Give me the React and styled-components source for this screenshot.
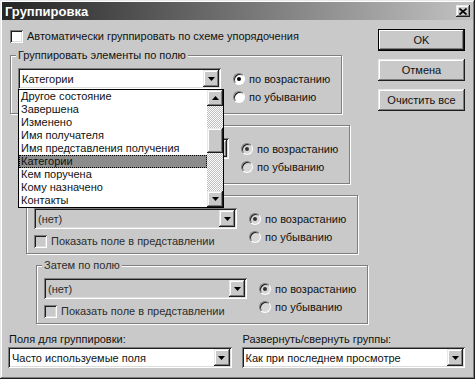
import React from "react";
import styled, { createGlobalStyle, css } from "styled-components";

const face = "#c9c9c9";

const GlobalStyle = createGlobalStyle`
  html, body { margin: 0; padding: 0; background: ${face}; }
  body {
    font-family: "Liberation Sans", Arial, sans-serif;
    font-size: 11px;
    color: #111;
  }
`;

const raised = css`
  box-shadow: inset -1px -1px #1e1e1e, inset 1px 1px #e8e8e8,
    inset -2px -2px #7e7e7e, inset 2px 2px #fff;
`;

const sunken = css`
  box-shadow: inset 1px 1px #7e7e7e, inset -1px -1px #fff,
    inset 2px 2px #1e1e1e, inset -2px -2px #dcdcdc;
`;

const Window = styled.div`
  width: 475px;
  height: 379px;
  box-sizing: border-box;
  padding: 2px;
  background: ${face};
  ${raised};
  display: flex;
  flex-direction: column;
`;

const TitleBar = styled.div`
  height: 18px;
  display: flex;
  align-items: center;
  padding: 0 3px 0 3px;
  background: linear-gradient(to right, #242424, #c2c2c2);
  color: #fff;
  font-weight: bold;
  font-size: 13px;
`;

const CloseButton = styled.div`
  margin-left: auto;
  width: 14px;
  height: 12px;
  background: ${face};
  ${raised};
  display: flex;
  align-items: center;
  justify-content: center;
`;

const Content = styled.div`
  flex: 1;
  display: flex;
  flex-direction: column;
  padding: 9px 8px 9px 6px;
`;

const TopArea = styled.div`
  display: flex;
  align-items: flex-start;
`;

const LeftColumn = styled.div`
  flex: 1;
  display: flex;
  flex-direction: column;
  margin-left: 2px;
`;

const ButtonColumn = styled.div`
  width: 87px;
  display: flex;
  flex-direction: column;
  gap: 8px;
`;

const Button = styled.div`
  height: 22px;
  box-sizing: border-box;
  display: flex;
  align-items: center;
  justify-content: center;
  background: ${face};
  ${raised};
  ${(p) =>
    p.$default &&
    css`
      outline: 1px solid #000;
      outline-offset: -1px;
      box-shadow: inset -2px -2px #1e1e1e, inset 2px 2px #fff,
        inset -3px -3px #7e7e7e;
    `}
`;

const CheckRow = styled.label`
  display: flex;
  align-items: center;
  gap: 4px;
  height: 13px;
  line-height: 13px;
  white-space: nowrap;
  margin-top: ${(p) => p.$offset || 0}px;
  color: ${(p) => (p.$disabled ? "#2c2c2c" : "#111")};
`;

const CheckBox = styled.span`
  width: 13px;
  height: 13px;
  flex: none;
  box-sizing: border-box;
  background: ${(p) => (p.$disabled ? face : "#fff")};
  ${sunken};
`;

const GroupBox = styled.div`
  position: relative;
  width: 332px;
  height: 59px;
  box-sizing: border-box;
  margin-top: ${(p) => (p.$first ? 12 : 11)}px;
  margin-left: ${(p) => p.$indent}px;
  border: 1px solid #7e7e7e;
  box-shadow: inset 1px 1px #fff, 1px 1px #fff;
`;

const Legend = styled.span`
  position: absolute;
  top: -7px;
  left: 5px;
  padding: 0 2px;
  line-height: 13px;
  background: ${face};
  color: ${(p) => (p.$disabled ? "#2c2c2c" : "#111")};
`;

const GroupGrid = styled.div`
  display: grid;
  grid-template-columns: 203px auto;
  column-gap: 12px;
  row-gap: 6px;
  padding: 12px 0 0 7px;
`;

const Combo = styled.div`
  position: relative;
  height: 21px;
  box-sizing: border-box;
  padding: 2px;
  display: flex;
  align-items: center;
  background: ${(p) => (p.$disabled ? face : "#fff")};
  color: ${(p) => (p.$disabled ? "#2c2c2c" : "#111")};
  ${sunken};
`;

const ComboText = styled.span`
  flex: 1;
  padding-left: 2px;
  white-space: nowrap;
`;

const DropButton = styled.span`
  width: 16px;
  height: 17px;
  flex: none;
  background: ${face};
  ${raised};
  display: flex;
  align-items: center;
  justify-content: center;
`;

const RadioColumn = styled.div`
  grid-column: 2;
  grid-row: 1 / span 2;
  display: flex;
  flex-direction: column;
  padding-top: 2px;
`;

const RadioRow = styled.label`
  display: flex;
  align-items: center;
  gap: 4px;
  height: 18px;
  white-space: nowrap;
`;

const RadioCircle = styled.span`
  position: relative;
  width: 12px;
  height: 12px;
  flex: none;
  box-sizing: border-box;
  border-radius: 50%;
  border: 1px solid;
  border-color: #7e7e7e #fff #fff #7e7e7e;
  box-shadow: inset 1px 1px #1e1e1e;
  background: ${(p) => (p.$disabled ? "#d8d8d8" : "#fff")};
  &::after {
    content: "";
    display: ${(p) => (p.$checked ? "block" : "none")};
    position: absolute;
    left: 3px;
    top: 3px;
    width: 4px;
    height: 4px;
    border-radius: 50%;
    background: ${(p) => (p.$disabled ? "#333" : "#000")};
  }
`;

const DropList = styled.div`
  position: absolute;
  top: 100%;
  left: 0;
  width: 204px;
  z-index: 5;
  display: flex;
  background: #fff;
  border: 1px solid #000;
  color: #111;
`;

const ListItems = styled.div`
  flex: 1;
  min-width: 0;
`;

const ListItem = styled.div`
  height: 13px;
  line-height: 13px;
  padding-left: 2px;
  white-space: nowrap;
  overflow: hidden;
  ${(p) =>
    p.$selected &&
    css`
      background: #8c8c8c;
      outline: 1px dotted #000;
      outline-offset: -1px;
    `}
`;

const ScrollBar = styled.div`
  width: 16px;
  display: flex;
  flex-direction: column;
`;

const ScrollArrow = styled.span`
  width: 16px;
  height: 16px;
  background: ${face};
  ${raised};
  display: flex;
  align-items: center;
  justify-content: center;
`;

const ScrollTrack = styled.div`
  flex: 1;
  background: repeating-conic-gradient(#fff 0 25%, #bdbdbd 0 50%) 0 0 / 2px 2px;
`;

const ScrollThumb = styled.div`
  margin-top: 22px;
  height: 25px;
  background: ${face};
  ${raised};
`;

const BottomArea = styled.div`
  display: grid;
  grid-template-columns: 1fr 1fr;
  column-gap: 10px;
  margin-top: 9px;
`;

const Field = styled.div`
  display: flex;
  flex-direction: column;
  gap: 1px;
`;

const FieldLabel = styled.span`
  line-height: 13px;
  padding-left: 1px;
`;

const Arrow = ({ up }) => (
  <svg width="7" height="4" viewBox="0 0 7 4">
    <polygon points={up ? "3.5,0 7,4 0,4" : "0,0 7,0 3.5,4"} fill="#000" />
  </svg>
);

const ComboBox = ({ value, disabled, children }) => (
  <Combo $disabled={disabled}>
    <ComboText>{value}</ComboText>
    <DropButton>
      <Arrow />
    </DropButton>
    {children}
  </Combo>
);

const fieldChoices = [
  "Другое состояние",
  "Завершена",
  "Изменено",
  "Имя получателя",
  "Имя представления получения",
  "Категории",
  "Кем поручена",
  "Кому назначено",
  "Контакты",
];

const groups = [
  { legend: "Группировать элементы по полю", value: "Категории", indent: 0 },
  { legend: "Затем по полю", value: "(нет)", indent: 8, disabled: true },
  { legend: "Затем по полю", value: "(нет)", indent: 16, disabled: true },
  { legend: "Затем по полю", value: "(нет)", indent: 26, disabled: true },
];

const FieldList = () => (
  <DropList>
    <ListItems>
      {fieldChoices.map((name) => (
        <ListItem key={name} $selected={name === "Категории"}>
          {name}
        </ListItem>
      ))}
    </ListItems>
    <ScrollBar>
      <ScrollArrow>
        <Arrow up />
      </ScrollArrow>
      <ScrollTrack>
        <ScrollThumb />
      </ScrollTrack>
      <ScrollArrow>
        <Arrow />
      </ScrollArrow>
    </ScrollBar>
  </DropList>
);

const Group = ({ legend, value, indent, disabled, first }) => (
  <GroupBox $indent={indent} $first={first}>
    <Legend $disabled={disabled}>{legend}</Legend>
    <GroupGrid>
      <ComboBox value={value} disabled={disabled}>
        {first && <FieldList />}
      </ComboBox>
      <RadioColumn>
        <RadioRow>
          <RadioCircle $checked $disabled={disabled} />
          по возрастанию
        </RadioRow>
        <RadioRow>
          <RadioCircle $disabled={disabled} />
          по убыванию
        </RadioRow>
      </RadioColumn>
      <CheckRow $disabled={disabled}>
        <CheckBox $disabled={disabled} />
        Показать поле в представлении
      </CheckRow>
    </GroupGrid>
  </GroupBox>
);

export default function App() {
  return (
    <>
      <GlobalStyle />
      <Window>
        <TitleBar>
          Группировка
          <CloseButton>
            <svg width="8" height="7" viewBox="0 0 8 7">
              <path d="M0.5 0.5 L7.5 6.5 M7.5 0.5 L0.5 6.5" stroke="#000" strokeWidth="1.6" />
            </svg>
          </CloseButton>
        </TitleBar>
        <Content>
          <TopArea>
            <LeftColumn>
              <CheckRow $offset={1}>
                <CheckBox />
                Автоматически группировать по схеме упорядочения
              </CheckRow>
              {groups.map((g, i) => (
                <Group key={i} {...g} first={i === 0} />
              ))}
            </LeftColumn>
            <ButtonColumn>
              <Button $default>OK</Button>
              <Button>Отмена</Button>
              <Button>Очистить все</Button>
            </ButtonColumn>
          </TopArea>
          <BottomArea>
            <Field>
              <FieldLabel>Поля для группировки:</FieldLabel>
              <ComboBox value="Часто используемые поля" />
            </Field>
            <Field>
              <FieldLabel>Развернуть/свернуть группы:</FieldLabel>
              <ComboBox value="Как при последнем просмотре" />
            </Field>
          </BottomArea>
        </Content>
      </Window>
    </>
  );
}
